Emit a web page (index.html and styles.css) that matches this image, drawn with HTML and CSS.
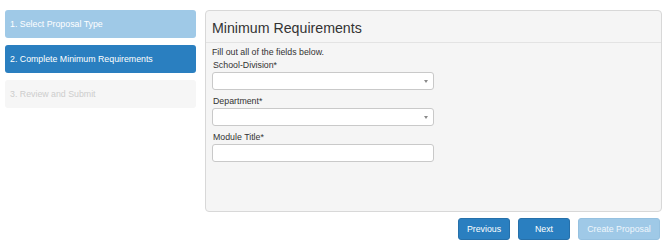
FILE: index.html
```html
<!DOCTYPE html>
<html>
<head>
<meta charset="utf-8">
<link rel="stylesheet" href="styles.css">
</head>
<body>
<div class="page">
  <nav class="steps">
    <div class="step step-done">1. Select Proposal Type</div>
    <div class="step step-active">2. Complete Minimum Requirements</div>
    <div class="step step-todo">3. Review and Submit</div>
  </nav>
  <main class="main">
    <section class="panel">
      <h2 class="panel-title">Minimum Requirements</h2>
      <div class="panel-body">
        <p class="intro">Fill out all of the fields below.</p>
        <div class="group">
          <label class="label">School-Division*</label>
          <div class="select"><span class="caret"></span></div>
        </div>
        <div class="group">
          <label class="label">Department*</label>
          <div class="select"><span class="caret"></span></div>
        </div>
        <div class="group">
          <label class="label">Module Title*</label>
          <div class="input"></div>
        </div>
      </div>
    </section>
    <div class="actions">
      <button class="btn btn-prev">Previous</button>
      <button class="btn btn-next">Next</button>
      <button class="btn btn-disabled">Create Proposal</button>
    </div>
  </main>
</div>
</body>
</html>
```
FILE: styles.css
```css
* { box-sizing: border-box; }
html, body { margin: 0; padding: 0; background: #fff; }
body {
  font-family: "Liberation Sans", Arial, sans-serif;
  font-size: 9px;
  color: #333;
}
.page {
  display: flex;
  padding: 10px 7px 0 5px;
  gap: 9px;
}
.steps {
  width: 191px;
  display: flex;
  flex-direction: column;
  gap: 7px;
}
.step {
  height: 28px;
  border-radius: 3px;
  padding-left: 5px;
  display: flex;
  align-items: center;
  font-size: 8.8px;
}
.step-done { background: #9fc9e7; color: #fff; }
.step-active { background: #2a7fc0; color: #fff; }
.step-todo { background: #f6f6f6; color: #cdcdcd; }
.main {
  width: 457px;
  display: flex;
  flex-direction: column;
}
.panel {
  height: 202px;
  background: #f5f5f5;
  border: 1px solid #d8d8d8;
  border-radius: 4px;
}
.panel-title {
  margin: 0;
  font-weight: normal;
  font-size: 14.2px;
  line-height: 16px;
  color: #333;
  padding: 9px 6px 6px;
  border-bottom: 1px solid #e3e3e3;
}
.panel-body {
  padding: 3px 6px 0;
  display: flex;
  flex-direction: column;
}
.intro {
  margin: 0;
  line-height: 13px;
  font-size: 8.8px;
}
.group {
  display: flex;
  flex-direction: column;
  margin-bottom: 5px;
}
.label {
  line-height: 12px;
  font-size: 8.8px;
  margin-bottom: 1px;
  padding-left: 1px;
}
.select, .input {
  width: 222px;
  height: 18px;
  background: #fff;
  border: 1px solid #c9c9c9;
  border-radius: 3px;
  position: relative;
}
.caret {
  position: absolute;
  right: 5px;
  top: 7px;
  width: 0;
  height: 0;
  border-left: 2.5px solid transparent;
  border-right: 2.5px solid transparent;
  border-top: 3px solid #8a8a8a;
}
.actions {
  display: flex;
  justify-content: flex-end;
  gap: 8px;
  margin-top: 6px;
  padding-right: 2px;
}
.btn {
  height: 22px;
  border-radius: 3px;
  font-family: "Liberation Sans", Arial, sans-serif;
  font-size: 8.8px;
  color: #fff;
  padding: 0;
  cursor: pointer;
}
.btn-prev, .btn-next {
  width: 52px;
  background: #2a7fc0;
  border: 1px solid #2670aa;
}
.btn-disabled {
  width: 82px;
  background: #9fc9e7;
  border: 1px solid #96c1e0;
  color: #eef6fc;
}
```
